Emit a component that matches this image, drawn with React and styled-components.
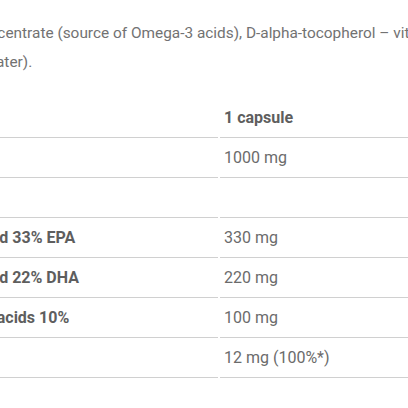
import React from "react";
import styled, { createGlobalStyle } from "styled-components";

const Global = createGlobalStyle`
  html, body {
    margin: 0;
    padding: 0;
    background: #ffffff;
    overflow: hidden;
  }
  body {
    font-family: Roboto, "Liberation Sans", sans-serif;
    font-size: 16px;
    color: #6b6b6b;
  }
`;

const S = {
  Viewport: styled.div`
    width: 408px;
    height: 408px;
    overflow: hidden;
  `,
  Content: styled.div`
    margin-left: -161px;
    width: 800px;
    padding-top: 19px;
  `,
  Text: styled.p`
    margin: 0 0 21px 0;
    font-size: 15.4px;
    font-weight: 400;
    color: #727272;
    line-height: 29px;
    white-space: nowrap;
  `,
  Table: styled.div`
    display: grid;
    grid-template-columns: 379px 1fr;
    column-gap: 2px;
  `,
  Cell: styled.div`
    height: 40px;
    display: flex;
    align-items: center;
    padding-left: ${(p) => (p.$right ? "4px" : "8px")};
    border-bottom: 1px solid #d0d0d0;
    font-weight: ${(p) => (p.$bold ? 700 : 400)};
    color: ${(p) => (p.$bold ? "#5e5e5e" : "#6b6b6b")};
    box-sizing: border-box;
    white-space: nowrap;
  `,
};

const rows = [
  { name: "", value: "1 capsule", head: true },
  { name: "Fish oil", value: "1000 mg" },
  { name: "Including:", value: "" },
  { name: "Eicosapentaenoic acid 33% EPA", value: "330 mg" },
  { name: "Docosahexaenoic acid 22% DHA", value: "220 mg" },
  { name: "Other omega-3 fatty acids 10%", value: "100 mg" },
  { name: "Vitamin E", value: "12 mg (100%*)", plain: true },
];

const App = () => {
  return (
    <>
      <Global />
      <S.Viewport>
        <S.Content>
          <S.Text>
            Ingredients: fish oil concentrate (source of Omega-3 acids), D-alpha-tocopherol – vitamin E, capsule shell
            <br />
            soy, glycerol, purified water).
          </S.Text>
          <S.Table>
            {rows.map((r, i) => (
              <React.Fragment key={i}>
                <S.Cell $bold={!r.plain && i > 2}>{r.name}</S.Cell>
                <S.Cell $right $bold={r.head}>
                  {r.value}
                </S.Cell>
              </React.Fragment>
            ))}
          </S.Table>
        </S.Content>
      </S.Viewport>
    </>
  );
};

export default App;
